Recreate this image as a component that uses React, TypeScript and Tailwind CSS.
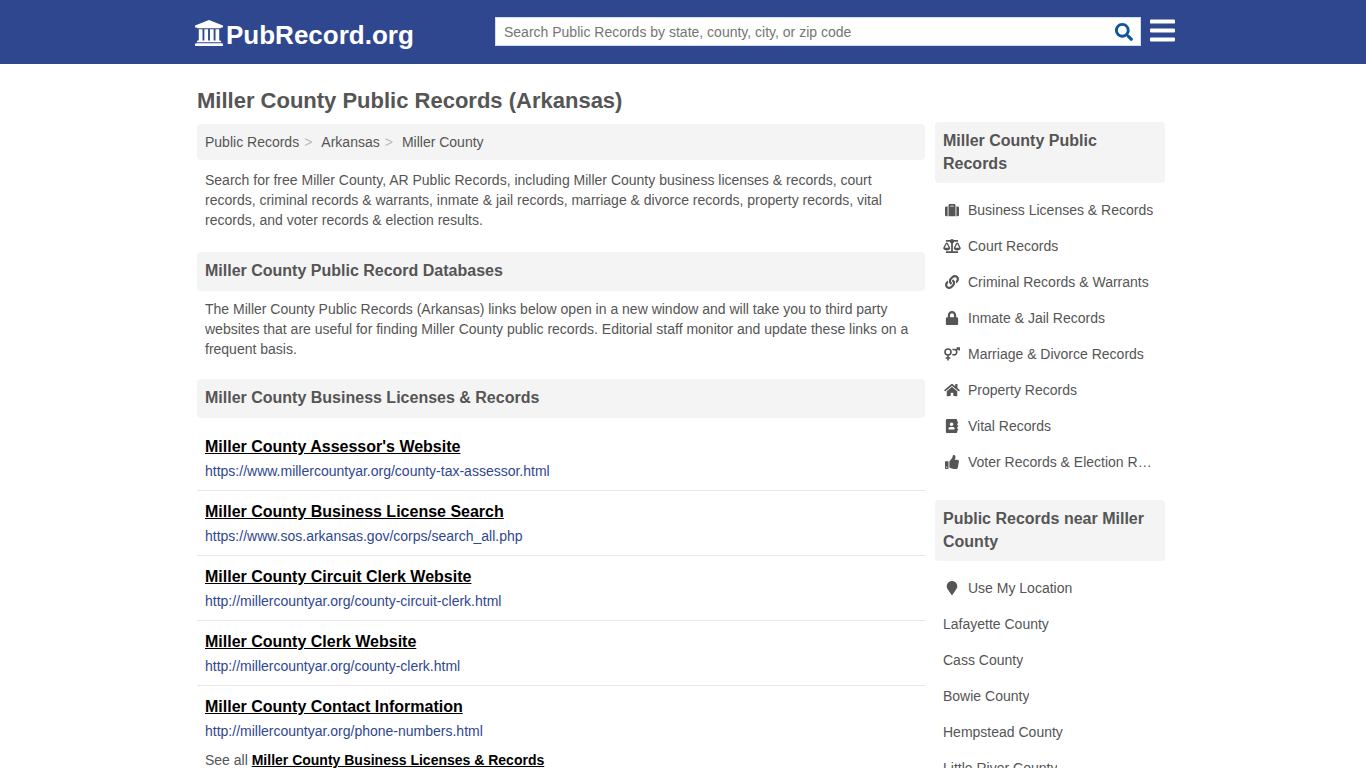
import type { ComponentType } from 'react';
import {
    FaAddressBook,
    FaBalanceScale,
    FaBars,
    FaHome,
    FaLink,
    FaLock,
    FaMapMarker,
    FaSearch,
    FaSuitcase,
    FaThumbsUp,
} from 'react-icons/fa';

const breadcrumbs = ['Public Records', 'Arkansas', 'Miller County'];

const records = [
    { title: "Miller County Assessor's Website", url: 'https://www.millercountyar.org/county-tax-assessor.html' },
    { title: 'Miller County Business License Search', url: 'https://www.sos.arkansas.gov/corps/search_all.php' },
    { title: 'Miller County Circuit Clerk Website', url: 'http://millercountyar.org/county-circuit-clerk.html' },
    { title: 'Miller County Clerk Website', url: 'http://millercountyar.org/county-clerk.html' },
    { title: 'Miller County Contact Information', url: 'http://millercountyar.org/phone-numbers.html' },
];

type SideLink = { name: string; icon?: ComponentType<{ className?: string }> };

function BankIcon({ className }: { className?: string }) {
    return (
        <svg viewBox="0 0 1920 1792" fill="currentColor" aria-hidden="true" className={className}>
            <path d="M960 0l960 384v128h-128q0 26-20.5 45t-48.5 19H197q-28 0-48.5-19T128 512H0V384zM256 640h256v768h128V640h256v768h128V640h256v768h128V640h256v768h59q28 0 48.5 19t20.5 45v64H128v-64q0-26 20.5-45t48.5-19h59zM1851 1600q28 0 48.5 19t20.5 45v128H0v-128q0-26 20.5-45T69 1600z" />
        </svg>
    );
}

function CoupleIcon({ className }: { className?: string }) {
    return (
        <svg viewBox="0 0 18 14" fill="none" stroke="currentColor" strokeWidth="1.6" aria-hidden="true" className={className}>
            <circle cx="5" cy="5" r="3" />
            <path d="M5 8v5.6M2.6 11h4.8" />
            <path d="M9.4 2.5h1.6a2.7 2.7 0 1 1-1.6 4.8M13 3.2l3-2.2M13.6 1h2.6v2.6" />
        </svg>
    );
}

const categories: SideLink[] = [
    { name: 'Business Licenses & Records', icon: FaSuitcase },
    { name: 'Court Records', icon: FaBalanceScale },
    { name: 'Criminal Records & Warrants', icon: FaLink },
    { name: 'Inmate & Jail Records', icon: FaLock },
    { name: 'Marriage & Divorce Records', icon: CoupleIcon },
    { name: 'Property Records', icon: FaHome },
    { name: 'Vital Records', icon: FaAddressBook },
    { name: 'Voter Records & Election Results', icon: FaThumbsUp },
];

const nearby: SideLink[] = [
    { name: 'Use My Location', icon: FaMapMarker },
    { name: 'Lafayette County' },
    { name: 'Cass County' },
    { name: 'Bowie County' },
    { name: 'Hempstead County' },
    { name: 'Little River County' },
];

function SectionTitle({ children }: { children: string }) {
    return <h2 className="rounded bg-[#f4f4f4] px-2 pt-[7px] pb-2 text-base font-bold">{children}</h2>;
}

function SideSection({ title, links }: { title: string; links: SideLink[] }) {
    return (
        <section>
            <h2 className="rounded bg-[#f4f4f4] px-2 pt-[7px] pb-2 text-base leading-[23px] font-bold">{title}</h2>
            <ul className="mt-[9px] px-2">
                {links.map((link) => (
                    <li key={link.name}>
                        <a href="#" className="flex h-9 items-center gap-[7px]">
                            {link.icon && <link.icon className="h-[14px] w-[18px] shrink-0" />}
                            <span className="truncate">{link.name}</span>
                        </a>
                    </li>
                ))}
            </ul>
        </section>
    );
}

export default function App() {
    return (
        <div className="min-h-screen bg-white font-['Liberation_Sans',Arial,sans-serif] text-sm text-[#555]">
            {/* Header */}
            <header className="bg-[#2f478f]">
                <div className="mx-auto flex h-16 max-w-[984px] items-center pb-[2px] pl-1">
                    <a href="#" className="flex w-[300px] shrink-0 items-center gap-[3px] pt-2 text-white">
                        <BankIcon className="mb-1 h-[26px] w-7" />
                        <span className="text-[26px] leading-8 font-bold">PubRecord.org</span>
                    </a>
                    <form
                        className="flex h-[29px] flex-1 items-center border border-[#cfdcf5] bg-white pt-[2px]"
                        onSubmit={(e) => e.preventDefault()}
                    >
                        <input
                            type="text"
                            aria-label="Search Public Records"
                            placeholder="Search Public Records by state, county, city, or zip code"
                            className="min-w-0 flex-1 px-2 outline-none placeholder:text-[#757575]"
                        />
                        <button type="submit" aria-label="Search" className="px-[7px] text-[#0b559f]">
                            <FaSearch className="h-[18px] w-[18px]" />
                        </button>
                    </form>
                    <button type="button" aria-label="Menu" className="ml-[9px] pb-[2px] text-white">
                        <FaBars className="h-[29px] w-[25px]" />
                    </button>
                </div>
            </header>

            <main className="mx-auto max-w-[984px] pr-[10px] pl-[6px]">
                <h1 className="pt-[22px] text-[22px] leading-[30px] font-bold">Miller County Public Records (Arkansas)</h1>

                <div className="mt-[6px] flex gap-[10px]">
                    <div className="min-w-0 flex-1 pt-[2px]">
                        <ol className="flex rounded bg-[#f4f4f4] px-2 py-2">
                            {breadcrumbs.map((name, i) => (
                                <li key={name}>
                                    {i > 0 && <span className="pr-[9px] pl-[5px] text-[#bbb]">&gt;</span>}
                                    <a href="#">{name}</a>
                                </li>
                            ))}
                        </ol>
                        <p className="mt-[10px] px-2">
                            Search for free Miller County, AR Public Records, including Miller County business licenses &amp; records, court
                            records, criminal records &amp; warrants, inmate &amp; jail records, marriage &amp; divorce records, property
                            records, vital records, and voter records &amp; election results.
                        </p>

                        <div className="mt-[22px]">
                            <SectionTitle>Miller County Public Record Databases</SectionTitle>
                        </div>
                        <p className="mt-2 px-2">
                            The Miller County Public Records (Arkansas) links below open in a new window and will take you to third party
                            websites that are useful for finding Miller County public records. Editorial staff monitor and update these
                            links on a frequent basis.
                        </p>

                        <div className="mt-5">
                            <SectionTitle>Miller County Business Licenses &amp; Records</SectionTitle>
                        </div>
                        <ul className="mt-2 divide-y divide-[#e8e8e8]">
                            {records.map((record) => (
                                <li key={record.title} className="px-2 pt-[9px] pb-[7px]">
                                    <a href="#" className="block text-base leading-6 font-bold text-black underline">
                                        {record.title}
                                    </a>
                                    <p className="leading-6 text-[#2f478f]">{record.url}</p>
                                </li>
                            ))}
                        </ul>
                        <p className="px-2">
                            See all{' '}
                            <a href="#" className="font-bold text-black underline">
                                Miller County Business Licenses &amp; Records
                            </a>
                        </p>
                    </div>

                    {/* Sidebar */}
                    <aside className="flex w-[230px] shrink-0 flex-col gap-5">
                        <SideSection title="Miller County Public Records" links={categories} />
                        <SideSection title="Public Records near Miller County" links={nearby} />
                    </aside>
                </div>
            </main>
        </div>
    );
}
